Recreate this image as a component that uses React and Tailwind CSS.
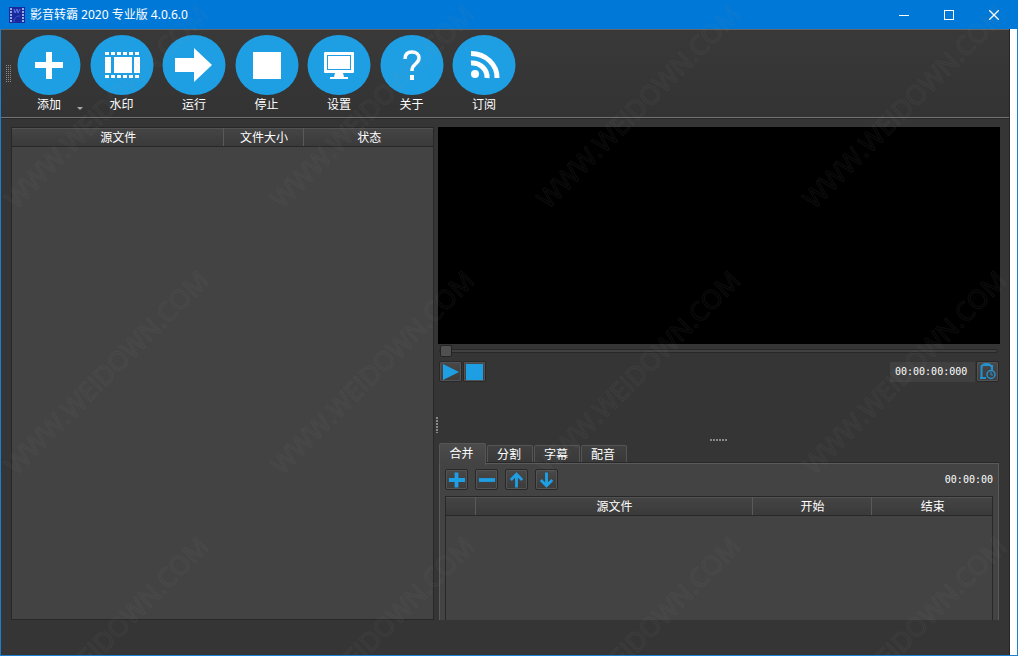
import { useState } from "react";

const TOOLS = [
  {
    label: "添加",
    menu: true,
    icon: (
      <path d="M29 17h6v10h11v6H35v11h-6V33H18v-6h11z" fill="#fff" />
    ),
  },
  {
    label: "水印",
    icon: (
      <g fill="#fff">
        <path d="M15 22h6v16h-6zM24 22h18v16H24zM44 22h6v16h-6z" />
        <path
          d="M15 18.500h35M15 41.500h35"
          stroke="#fff"
          strokeWidth="3"
          strokeDasharray="4 2"
        />
      </g>
    ),
  },
  {
    label: "运行",
    icon: <path d="M13 23h19V13l18 17-18 17V37H13z" fill="#fff" />,
  },
  {
    label: "停止",
    icon: <path d="M18 17h28v27H18z" fill="#fff" />,
  },
  {
    label: "设置",
    icon: (
      <g>
        <rect x="17" y="17" width="30" height="21" rx="1" fill="#fff" />
        <rect x="20.5" y="20.5" width="23" height="14" fill="#fff" stroke="#1e9fe4" />
        <path d="M28 38h8l1 4h4v2H23v-2h4z" fill="#fff" />
      </g>
    ),
  },
  {
    label: "关于",
    icon: (
      <g>
        <path
          d="M25 24c0-5 3-7 7-7s7 2 7 6c0 6-7 6-7 12v1"
          fill="none"
          stroke="#fff"
          strokeWidth="3.5"
        />
        <path d="M30 40h4v5h-4z" fill="#fff" />
      </g>
    ),
  },
  {
    label: "订阅",
    icon: (
      <g fill="none" stroke="#fff" strokeWidth="5">
        <circle cx="23" cy="39" r="4" fill="#fff" stroke="none" />
        <path d="M19 28a15 14 0 0 1 16 15M19 18.500a26 24 0 0 1 26 24.500" />
      </g>
    ),
  },
];

const TABS = ["合并", "分割", "字幕", "配音"];

const CLIP_ACTIONS = [
  { label: "添加片段", path: "M8 1h4v6h7v4h-7v6H8v-6H2V7h6z" },
  { label: "删除片段", path: "M2 7h17v4H2z" },
  {
    label: "上移",
    path: "M10 3v14M4 9l6-6 6 6",
    stroke: true,
  },
  {
    label: "下移",
    path: "M10 1v14M4 9l6 6 6-6",
    stroke: true,
  },
];

const Watermark = () => {
  return (
    <svg
      className="pointer-events-none absolute inset-0 h-full w-full"
      aria-hidden="true"
    >
      <defs>
        <pattern id="mark" width="266" height="266" patternUnits="userSpaceOnUse">
          <text
            x="106"
            y="116"
            textAnchor="middle"
            transform="rotate(-45 106 106)"
            fontFamily="Open Sans, sans-serif"
            fontSize="26"
            fill="none"
            stroke="#808080"
            strokeOpacity="0.09"
          >
            WWW.WEIDOWN.COM
          </text>
        </pattern>
      </defs>
      <rect width="100%" height="100%" fill="url(#mark)" />
    </svg>
  );
};

const TitleBar = () => {
  return (
    <header className="flex h-[29px] shrink-0 items-center bg-[#0078d7] pr-[2px] pl-[9px] text-white">
      <svg width="16" height="16" viewBox="0 0 16 16" aria-hidden="true">
        <rect width="16" height="16" fill="#1a2a9c" />
        <path
          d="M2 1v15M14 1v15"
          stroke="#c9d4f5"
          strokeWidth="1.5"
          strokeDasharray="2 1"
        />
        <path d="M5 2l1 4 2-4 1 4 2-4" fill="none" stroke="#5f7be0" />
        <path d="M5 15c0-4 2-6 6-6" fill="none" stroke="#3d57c8" />
      </svg>
      <h1 className="ml-[5px] flex-1 text-xs">影音转霸 2020 专业版 4.0.6.0</h1>
      <button className="grid h-full w-[45px] place-items-center" aria-label="最小化">
        <svg width="10" height="10">
          <path d="M0 5.5h10" stroke="#fff" />
        </svg>
      </button>
      <button className="grid h-full w-[45px] place-items-center" aria-label="最大化">
        <svg width="10" height="10">
          <rect x=".5" y=".5" width="9" height="9" fill="none" stroke="#fff" />
        </svg>
      </button>
      <button className="grid h-full w-[45px] place-items-center" aria-label="关闭">
        <svg width="10" height="10">
          <path d="M0 0l10 10M10 0L0 10" stroke="#fff" strokeWidth="1.3" />
        </svg>
      </button>
    </header>
  );
};

const Toolbar = () => {
  return (
    <nav className="flex h-[89px] shrink-0 border-t border-b border-t-[#666] border-b-[#727272] bg-linear-to-b from-[#393939] to-[#333] pl-[5px]">
      <svg width="6" height="17" className="mt-[35px] mr-[5px] shrink-0" aria-hidden="true">
        <path
          d="M.5 0v17M2.500 0v17M4.500 0v17"
          stroke="#8a8a8a"
          strokeDasharray="1 1"
        />
      </svg>
      <div className="flex w-[499px] justify-between pt-[5px]">
        {TOOLS.map((tool) => {
          return (
            <button
              key={tool.label}
              className="relative flex w-16 flex-col items-center text-xs text-white"
            >
              <svg width="64" height="60" viewBox="0 0 64 60" aria-hidden="true">
                <ellipse cx="32" cy="30" rx="31.5" ry="30" fill="#1e9fe4" />
                {tool.icon}
              </svg>
              <span className="leading-5">{tool.label}</span>
              {tool.menu && (
                <svg
                  width="6"
                  height="3"
                  className="absolute -right-[2px] bottom-[7px]"
                  aria-hidden="true"
                >
                  <path d="M0 0h6L3 3z" fill="#aaa" />
                </svg>
              )}
            </button>
          );
        })}
      </div>
    </nav>
  );
};

const ListTable = ({ label, columns }) => {
  return (
    <table aria-label={label} className="w-full table-fixed border-collapse text-xs text-white">
      <colgroup>
        {columns.map((col) => (
          <col key={col.id} className={col.width} />
        ))}
      </colgroup>
      <thead>
        <tr className="h-[18px] bg-linear-to-b from-[#454545] to-[#3a3a3a] shadow-[inset_0_1px_0_#525252,0_1px_0_#282828]">
          {columns.map((col) => (
            <th
              key={col.id}
              scope="col"
              className="border-r border-[#5a5a5a] p-0 pt-[1px] pl-[2px] leading-[17px] font-normal last:border-r-0"
            >
              {col.id === "index" ? "" : col.id}
            </th>
          ))}
        </tr>
      </thead>
      <tbody></tbody>
    </table>
  );
};

const SmallButton = ({ label, children }) => {
  return (
    <button
      aria-label={label}
      className="grid h-[21px] w-[23px] place-items-center rounded-xs border border-[#282828] bg-linear-to-b from-[#484848] to-[#3c3c3c] shadow-[inset_0_0_0_1px_#535353]"
    >
      {children}
    </button>
  );
};

const Preview = () => {
  return (
    <section className="flex min-h-0 flex-col" aria-label="预览">
      <div className="grow-217 basis-0 bg-black"></div>
      <input
        type="range"
        min="0"
        max="100"
        defaultValue="0"
        aria-label="播放进度"
        className="mr-[2px] ml-[1px] my-[1px] h-3 appearance-none bg-transparent [&::-webkit-slider-runnable-track]:h-[4px] [&::-webkit-slider-runnable-track]:rounded-sm [&::-webkit-slider-runnable-track]:border [&::-webkit-slider-runnable-track]:border-[#282828] [&::-webkit-slider-runnable-track]:bg-[#404040] [&::-webkit-slider-thumb]:-mt-[5px] [&::-webkit-slider-thumb]:h-3 [&::-webkit-slider-thumb]:w-3 [&::-webkit-slider-thumb]:appearance-none [&::-webkit-slider-thumb]:rounded-xs [&::-webkit-slider-thumb]:border [&::-webkit-slider-thumb]:border-[#242424] [&::-webkit-slider-thumb]:bg-[#505050]"
      />
      <div className="mt-[3px] flex items-center gap-[1px] pr-[1px] pl-[1px]">
        <SmallButton label="播放">
          <svg width="17" height="16" viewBox="0 0 17 16">
            <path d="M1 0l16 8-16 8z" fill="#1e9fe4" />
          </svg>
        </SmallButton>
        <SmallButton label="停止播放">
          <svg width="17" height="16" viewBox="0 0 17 16">
            <path d="M0 0h17v16H0z" fill="#1e9fe4" />
          </svg>
        </SmallButton>
        <input
          type="text"
          aria-label="当前时间"
          defaultValue="00:00:00:000"
          className="ml-auto h-5 w-[85px] bg-[#404040] px-[5px] font-['DejaVu_Sans_Mono',monospace] text-[10px] text-white"
        />
        <SmallButton label="插入时间">
          <svg
            width="17"
            height="17"
            viewBox="0 0 17 17"
            fill="none"
            stroke="#2492cf"
            strokeWidth="1.5"
          >
            <path d="M7 15H2.500V3M2 3h2M11 3h2v4M1 15h6" strokeWidth="2" />
            <path d="M4 3c0-2 7-2 7 0" strokeWidth="3" />
            <circle cx="12" cy="11.5" r="4" />
            <path d="M12 9v3h2" strokeWidth="1" />
          </svg>
        </SmallButton>
      </div>
      <div className="grow-53 basis-0"></div>
    </section>
  );
};

const ClipTabs = () => {
  const [active, setActive] = useState("合并");

  return (
    <section className="flex min-h-0 flex-col pl-[1px] pr-[1px]">
      <div role="tablist" className="flex h-5 items-end gap-[1px]">
        {TABS.map((tab) => (
          <button
            key={tab}
            id={`tab-${tab}`}
            role="tab"
            aria-selected={tab === active}
            aria-controls="clip-panel"
            onClick={() => setActive(tab)}
            className={
              tab === active
                ? "z-10 -mb-[2px] h-[22px] w-[47px] rounded-t-xs border border-b-0 border-[#565656] bg-linear-to-b from-[#4b4b4b] to-[#434343] pr-[2px] pb-[2px] text-xs leading-[18px] text-white"
                : "h-[18px] w-[46px] rounded-t-xs border border-b-0 border-[#555] bg-linear-to-b from-[#404040] to-[#393939] pr-[2px] text-xs leading-[17px] text-white"
            }
          >
            {tab}
          </button>
        ))}
      </div>
      <div
        id="clip-panel"
        role="tabpanel"
        aria-labelledby={`tab-${active}`}
        className="flex min-h-0 flex-1 flex-col border border-b-0 border-[#5a5a5a] bg-[#434343] px-[5px] pt-[5px] shadow-[0_-1px_0_#282828]"
      >
        <div className="mb-[6px] flex h-[21px] items-center gap-[7px]">
          {CLIP_ACTIONS.map((action) => (
            <SmallButton key={action.label} label={action.label}>
              <svg width="19" height="18" viewBox="0 0 20 18">
                <path
                  d={action.path}
                  fill={action.stroke ? "none" : "#1e9fe4"}
                  stroke={action.stroke ? "#1e9fe4" : "none"}
                  strokeWidth="3"
                />
              </svg>
            </SmallButton>
          ))}
          <span className="ml-auto font-['DejaVu_Sans_Mono',monospace] text-[10px] text-white">
            00:00:00
          </span>
        </div>
        <div className="min-h-0 flex-1 border border-b-0 border-[#282828]">
          <ListTable
            label="片段列表"
            columns={[
              { id: "index", width: "w-[29px]" },
              { id: "源文件" },
              { id: "开始", width: "w-[119px]" },
              { id: "结束", width: "w-[121px]" },
            ]}
          />
        </div>
      </div>
    </section>
  );
};

export default function App() {
  return (
    <div className="relative flex h-screen flex-col overflow-hidden bg-white font-['Noto_Sans','Noto_Sans_CJK_SC',sans-serif]">
      <TitleBar />
      <div className="flex min-h-0 flex-1 border-x border-b border-[#1a7fd0] pr-[7px]">
        <div className="flex min-w-0 flex-1 flex-col border-r border-[#242424] bg-[#353535]">
          <Toolbar />
          <main className="grid min-h-0 flex-1 grid-cols-[423fr_4px_562fr] border-t border-[#292929] pt-2 pr-[9px] pb-[35px] pl-[10px]">
            <section className="min-h-0 border border-[#282828] bg-[#434343]">
              <ListTable
                label="文件列表"
                columns={[
                  { id: "源文件" },
                  { id: "文件大小", width: "w-20" },
                  { id: "状态", width: "w-[130px]" },
                ]}
              />
            </section>
            <svg width="4" height="16" className="mt-[290px]" aria-hidden="true">
              <path
                d="M3 0v16"
                stroke="#888"
                strokeWidth="2"
                strokeDasharray="2 1"
              />
            </svg>
            <div className="grid min-h-0 grid-rows-[308fr_8px_177fr]">
              <Preview />
              <svg width="18" height="8" className="mx-auto" aria-hidden="true">
                <path
                  d="M0 5h18"
                  stroke="#888"
                  strokeWidth="2"
                  strokeDasharray="2 1"
                />
              </svg>
              <ClipTabs />
            </div>
          </main>
        </div>
      </div>
      <Watermark />
    </div>
  );
}
